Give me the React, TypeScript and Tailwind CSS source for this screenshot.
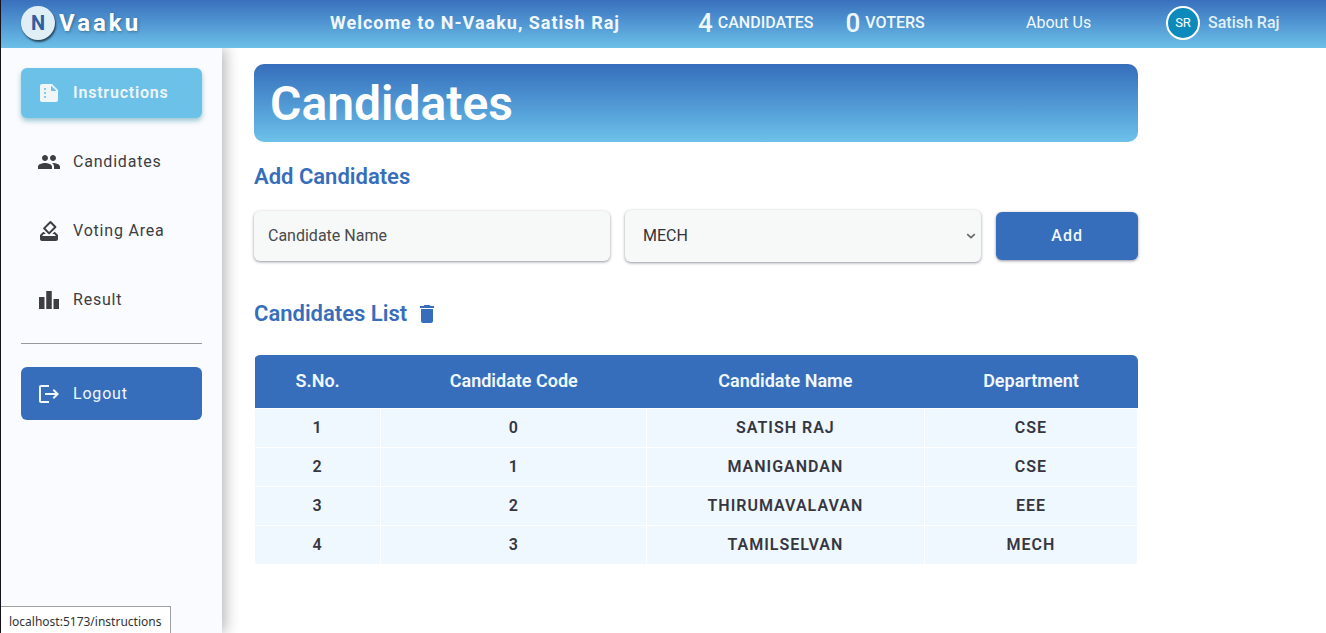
import { useState } from "react";
import type { ReactNode } from "react";
import {
  MdDelete,
  MdHowToVote,
  MdLeaderboard,
  MdLogout,
  MdPeople,
  MdSummarize,
} from "react-icons/md";

type Candidate = { code: number; name: string; department: string };

const candidates: Candidate[] = [
  { code: 0, name: "SATISH RAJ", department: "CSE" },
  { code: 1, name: "MANIGANDAN", department: "CSE" },
  { code: 2, name: "THIRUMAVALAVAN", department: "EEE" },
  { code: 3, name: "TAMILSELVAN", department: "MECH" },
];

const departments = ["MECH", "CSE", "EEE", "ECE", "CIVIL"];

function Header() {
  return (
    <header className="grid h-12 grid-cols-[309fr_368fr_328fr_140fr_160fr] items-center bg-linear-to-b from-[#3a70bd] to-[#6cc0e8] pb-[3px] pl-5 text-[#f0f8ff]">
      <div className="flex items-center gap-1">
        <span className="flex size-[34px] items-center justify-center rounded-full bg-[#e0eff5] text-xl font-bold text-[#2f5f9f] shadow-[1px_2px_2px_rgba(0,0,0,0.6)]">
          N
        </span>
        <span className="text-2xl font-bold tracking-[3px] text-white [text-shadow:1px_1px_3px_rgba(0,0,0,0.3)]">
          Vaaku
        </span>
      </div>
      <p className="text-lg font-bold tracking-[1px] whitespace-nowrap">
        Welcome to N-Vaaku, Satish Raj
      </p>
      <div className="flex items-center gap-8 font-medium whitespace-nowrap">
        <p className="flex items-center gap-[5px]">
          <span className="text-[26px] leading-8">4</span> CANDIDATES
        </p>
        <p className="flex items-center gap-[5px]">
          <span className="text-[26px] leading-8">0</span> VOTERS
        </p>
      </div>
      <a href="#about" className="whitespace-nowrap">
        About Us
      </a>
      <div className="flex items-center gap-2 font-medium whitespace-nowrap text-[#e0f0f8]">
        <span className="flex size-[34px] items-center justify-center rounded-full border-2 border-white bg-[#0d8abc] text-[13px] font-normal text-white">
          SR
        </span>
        Satish Raj
      </div>
    </header>
  );
}

function NavItem({
  icon,
  label,
  active = false,
}: {
  icon: ReactNode;
  label: string;
  active?: boolean;
}) {
  return (
    <a
      href={"#" + label.toLowerCase().replace(" ", "-")}
      className={
        active
          ? "flex h-[50px] items-center gap-3 rounded-md bg-[#6cc1e9] px-4 font-semibold tracking-wider text-[#f0f5f8] shadow-[0_3px_5px_rgba(60,150,170,0.5)]"
          : "flex h-[50px] items-center gap-3 rounded-md px-4 tracking-wider text-[#3d3d42]"
      }
    >
      {icon}
      {label}
    </a>
  );
}

function Sidebar() {
  return (
    <aside className="z-10 w-[221px] shrink-0 bg-[#fafbfe] p-5 shadow-[3px_0_14px_rgba(0,0,0,0.3)]">
      <nav className="flex flex-col gap-[19px]">
        <NavItem icon={<MdSummarize className="size-6" />} label="Instructions" active />
        <NavItem icon={<MdPeople className="size-6" />} label="Candidates" />
        <NavItem icon={<MdHowToVote className="size-6" />} label="Voting Area" />
        <NavItem icon={<MdLeaderboard className="size-6" />} label="Result" />
      </nav>
      <hr className="mt-[18px] mb-[23px] border-[#98989b]" />
      <button
        type="button"
        className="flex h-[53px] w-full items-center gap-3 rounded-md bg-[#366ebc] px-4 tracking-wider text-[#f0f8ff]"
      >
        <MdLogout className="size-6" />
        Logout
      </button>
    </aside>
  );
}

function AddForm() {
  const [department, setDepartment] = useState("MECH");
  return (
    <form
      className="mt-[17px] grid grid-cols-[5fr_5fr_2fr] items-center gap-[15px]"
      onSubmit={(e) => e.preventDefault()}
    >
      <input
        type="text"
        aria-label="Candidate Name"
        placeholder="Candidate Name"
        className="h-[50px] w-full min-w-0 rounded-md bg-[#f7f9f9] px-3.5 pb-0.5 text-[#333] shadow-[0_1px_3px_rgba(40,40,70,0.5)] outline-none placeholder:text-[#484a4b]"
      />
      <div className="grid items-center">
        <select
          aria-label="Department"
          value={department}
          onChange={(e) => setDepartment(e.target.value)}
          className="col-start-1 row-start-1 h-[52px] w-full min-w-0 appearance-none rounded-md bg-[#f7f9f9] px-[18px] text-[#333338] shadow-[0_1px_3px_rgba(40,40,70,0.5)] outline-none"
        >
          {departments.map((d) => (
            <option key={d}>{d}</option>
          ))}
        </select>
        <svg
          viewBox="0 0 10 6"
          className="pointer-events-none col-start-1 row-start-1 mr-[5px] h-1.5 w-2.5 justify-self-end"
          aria-hidden="true"
        >
          <path d="M1.2 1.2 5 4.6 8.8 1.2" fill="none" stroke="#666" strokeWidth="1.6" />
        </svg>
      </div>
      <button
        type="submit"
        className="h-12 rounded-md bg-[#366ebc] font-medium tracking-[1px] text-[#f0f8ff] shadow-[0_1px_3px_rgba(40,40,70,0.5)]"
      >
        Add
      </button>
    </form>
  );
}

function CandidateTable() {
  return (
    <div className="mt-[25px] overflow-hidden rounded-md">
      <table className="w-full table-fixed border-collapse text-center font-semibold text-[#36363f]">
        <colgroup>
          <col className="w-[14.3%]" />
          <col className="w-[30.1%]" />
          <col className="w-[31.4%]" />
          <col className="w-[24.2%]" />
        </colgroup>
        <thead>
          <tr className="h-[53px] bg-[#366ebc] text-lg text-[#f0f8ff]">
            <th className="font-semibold">S.No.</th>
            <th className="font-semibold">Candidate Code</th>
            <th className="font-semibold">Candidate Name</th>
            <th className="font-semibold">Department</th>
          </tr>
        </thead>
        <tbody className="tracking-[1px]">
          {candidates.map((c, i) => (
            <tr key={c.code} className="h-[39px] bg-[#eff7ff]">
              <td className="border border-white">{i + 1}</td>
              <td className="border border-white">{c.code}</td>
              <td className="border border-white">{c.name}</td>
              <td className="border border-white">{c.department}</td>
            </tr>
          ))}
        </tbody>
      </table>
    </div>
  );
}

export default function App() {
  return (
    <div className="flex min-h-screen flex-col border-l border-[#14121c] bg-white font-[Roboto,sans-serif] text-base">
      <Header />
      <div className="flex flex-1 overflow-hidden">
        <Sidebar />
        <main className="min-w-0 flex-1 pt-4">
          <div className="mr-[17%] ml-8">
            <h1 className="rounded-[10px] bg-linear-to-b from-[#366ebc] to-[#6cc1e9] px-4 pt-1 pb-0.5 text-5xl leading-[72px] font-semibold text-white">
              Candidates
            </h1>
            <h2 className="mt-[19px] text-[22px] leading-8 font-semibold text-[#366ebc]">
              Add Candidates
            </h2>
            <AddForm />
            <div className="mt-9 flex items-center gap-2 text-[#366ebc]">
              <h2 className="text-[22px] leading-8 font-semibold">Candidates List</h2>
              <button type="button" aria-label="Delete all candidates">
                <MdDelete className="size-6" />
              </button>
            </div>
            <CandidateTable />
          </div>
        </main>
      </div>
      <div className="fixed bottom-0 left-px z-20 h-[27px] border-t border-r border-[#a0a0a2] bg-white px-2 pr-[9px] font-['Noto_Sans',sans-serif] text-xs leading-[29px] text-[#333]">
        localhost:5173/instructions
      </div>
    </div>
  );
}
